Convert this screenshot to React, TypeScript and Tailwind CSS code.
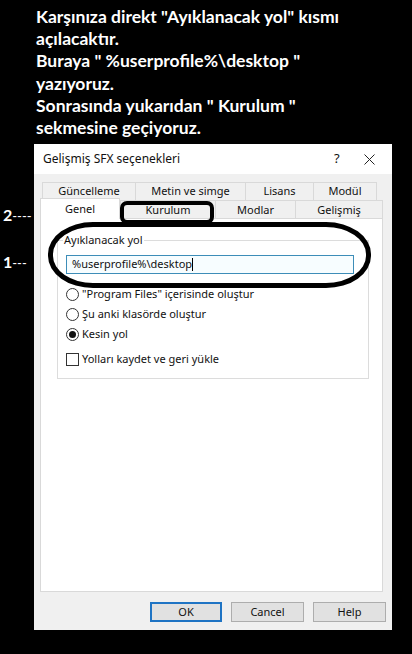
import React from 'react'

const ui = { fontFamily: '"Noto Sans", "Open Sans", sans-serif' }
const caption = { fontFamily: 'Lato, "Open Sans", sans-serif' }

function Radio({ on, label }: { on?: boolean; label: string }) {
  return (
    <div className="flex items-center h-[20px]">
      <span className="w-[13px] h-[13px] rounded-full border border-[#333] bg-white flex items-center justify-center">
        {on && <span className="w-[7px] h-[7px] rounded-full bg-[#111]" />}
      </span>
      <span className="ml-[3px]">{label}</span>
    </div>
  )
}

function Tab({ w, label, last, low }: { w: string; label: string; last?: boolean; low?: boolean }) {
  return (
    <div className={`${w} h-[18px] flex items-center justify-center border-t border-l border-[#d9d9d9] bg-[#f0f0f0] ${last ? 'border-r' : ''} ${low ? 'pt-[2px]' : ''}`}>
      {label}
    </div>
  )
}

export default function App() {
  return (
    <div className="relative w-[412px] h-[654px] bg-black overflow-hidden">
      <div style={caption} className="pl-[36px] pt-[6px] text-white font-bold text-[17.5px] leading-[22.2px]">
        <div>Karşınıza direkt "Ayıklanacak yol" kısmı</div>
        <div>açılacaktır.</div>
        <div>Buraya " %userprofile%\desktop "</div>
        <div>yazıyoruz.</div>
        <div>Sonrasında yukarıdan " Kurulum "</div>
        <div>sekmesine geçiyoruz.</div>
      </div>

      {/* dialog */}
      <div style={ui} className="ml-[34px] mt-[5px] w-[358px] h-[486px] flex flex-col text-[11px] text-[#111]">
        <div className="h-[30px] bg-white flex items-center pl-[9px] text-[12px]">
          <span className="flex-1">Gelişmiş SFX seçenekleri</span>
          <span className="w-[12px] text-[13px]">?</span>
          <span className="w-[46px] flex justify-center">
            <svg width="11" height="11" viewBox="0 0 11 11">
              <path d="M0.5 0.5 L10.5 10.5 M10.5 0.5 L0.5 10.5" stroke="#222" strokeWidth="1" fill="none" />
            </svg>
          </span>
        </div>

        <div className="flex-1 bg-[#f0f0f0] pt-[8px] pl-[6px] flex flex-col">
          <div className="flex ml-[2px]">
            <Tab w="w-[93px]" label="Güncelleme" />
            <Tab w="w-[110px]" label="Metin ve simge" />
            <Tab w="w-[68px]" label="Lisans" />
            <Tab w="w-[64px]" label="Modül" last />
          </div>
          <div className="flex items-end h-[18px]">
            <div className="relative z-10 w-[80px] h-[21px] -mb-px flex items-start pt-[2px] justify-center bg-white border-t border-l border-r border-[#d9d9d9]">
              Genel
            </div>
            <Tab w="w-[95px]" label="Kurulum" low />
            <Tab w="w-[80px]" label="Modlar" low />
            <Tab w="w-[88px]" label="Gelişmiş" last low />
          </div>

          <div className="w-[343px] h-[374px] bg-white border border-[#d9d9d9] pl-[16px] pt-[13px]">
            <fieldset className="w-[312px] h-[147px] border border-[#dcdcdc] pl-[8px] pr-[8px]">
              <legend className="ml-[-3px] px-[1px] leading-[16px]">Ayıklanacak yol</legend>
              <div className="mt-[7px] w-[288px] h-[19px] border border-[#3d8db8] bg-[#f7fdff] flex items-center pl-[5px]">
                <span>%userprofile%\desktop</span>
                <span className="w-px h-[13px] bg-black" />
              </div>
              <div className="mt-[10px] flex flex-col">
                <Radio label={'"Program Files" içerisinde oluştur'} />
                <Radio label="Şu anki klasörde oluştur" />
                <Radio on label="Kesin yol" />
                <div className="flex items-center h-[20px] mt-[5px]">
                  <span className="w-[13px] h-[13px] border border-[#333] bg-white" />
                  <span className="ml-[3px]">Yolları kaydet ve geri yükle</span>
                </div>
              </div>
            </fieldset>
          </div>

          <div className="flex pl-[110px] gap-[9px] mt-[10px]">
            <button className="w-[72px] h-[20px] bg-[#e1e1e1] border-2 border-[#1f74c4]">OK</button>
            <button className="w-[73px] h-[20px] bg-[#e1e1e1] border border-[#adadad]">Cancel</button>
            <button className="w-[73px] h-[20px] bg-[#e1e1e1] border border-[#adadad]">Help</button>
          </div>
        </div>
      </div>

      {/* annotations */}
      <div style={caption} className="absolute left-[3px] top-[205px] text-white text-[16px] leading-[20px]">
        <span className="font-bold">2</span>
        <span className="text-[13px]">----</span>
      </div>
      <div style={caption} className="absolute left-[3px] top-[252px] text-white text-[16px] leading-[20px]">
        <span className="font-bold">1</span>
        <span className="text-[13px]">---</span>
      </div>
      <div className="absolute left-[120px] top-[201px] w-[94px] h-[23px] border-[4px] border-black rounded-[7px]" />
      <div className="absolute left-[48px] top-[222px] w-[323px] h-[66px] border-[5px] border-black rounded-[45px/32px]" />
    </div>
  )
}
